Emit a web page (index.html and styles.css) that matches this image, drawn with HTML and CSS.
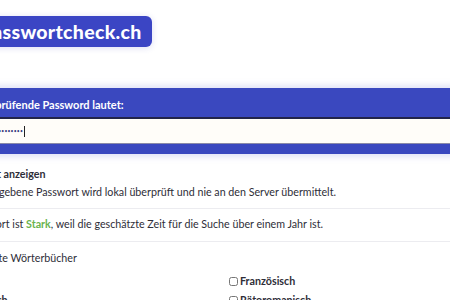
FILE: index.html
```html
<!DOCTYPE html>
<html lang="de">
<head>
<meta charset="utf-8">
<title>Passwortcheck.ch</title>
<link rel="stylesheet" href="styles.css">
</head>
<body>
<div class="page">
  <header class="header">
    <div class="logo">Passwortcheck.ch</div>
  </header>
  <section class="band">
    <label class="band-label">Das zu prüfende Password lautet:</label>
    <div class="field"><span class="dots">••••••••••••••••••••</span><span class="caret"></span></div>
  </section>
  <section class="content">
    <label class="show"><input type="checkbox" class="cb"> Passwort anzeigen</label>
    <p class="note">Das eingegebene Passwort wird lokal überprüft und nie an den Server übermittelt.</p>
    <p class="result">Das Passwort ist <span class="strong">Stark</span>, weil die geschätzte Zeit für die Suche über einem Jahr ist.</p>
    <p class="dict-title">Verwendete Wörterbücher</p>
    <div class="dicts">
      <label class="dict"></label>
      <label class="dict"><input type="checkbox" class="cb">Französisch</label>
      <label class="dict"><input type="checkbox" class="cb">Deutsch</label>
      <label class="dict"><input type="checkbox" class="cb">Rätoromanisch</label>
    </div>
  </section>
</div>
</body>
</html>
```
FILE: styles.css
```css
html, body {
  margin: 0;
  padding: 0;
  background: #ffffff;
  overflow: hidden;
}
body {
  font-family: "Lato", "Liberation Sans", sans-serif;
  color: #2e2e38;
}
.page {
  margin-left: -47px;
  width: 560px;
}
.header {
  padding-top: 16px;
  padding-left: 18px;
  height: 31px;
}
.logo {
  display: inline-block;
  background: #3b45c4;
  color: #ffffff;
  font-weight: 900;
  font-size: 19.5px;
  letter-spacing: 0.3px;
  line-height: 31px;
  height: 31px;
  padding: 0 10px 0 9px;
  border-radius: 6px;
  box-shadow: 0 1px 6px rgba(59, 69, 196, 0.18);
}
.band {
  margin-top: 41px;
  background: #3a48bf;
  padding: 10px 0 10px 0;
  box-shadow: 0 0 7px 2px rgba(90, 100, 210, 0.22);
}
.band-label {
  display: block;
  color: #ffffff;
  font-weight: 700;
  font-size: 11px;
  line-height: 14px;
  padding-left: 7px;
  margin-bottom: 5px;
}
.field {
  background: #fffdf9;
  border-top: 2px solid #22244a;
  border-bottom: 1px solid #8a8aa8;
  height: 24px;
  display: flex;
  align-items: center;
  padding-left: 8px;
}
.dots {
  font-size: 5px;
  letter-spacing: 0.2px;
  color: #3a3c80;
}
.caret {
  display: inline-block;
  width: 1px;
  height: 11px;
  background: #222;
  margin-left: 1px;
}
.content {
  padding-top: 14px;
  font-size: 10.7px;
}
.show {
  display: flex;
  align-items: center;
  gap: 3px;
  font-weight: 700;
  height: 12px;
  line-height: 12px;
  margin-left: -14px;
}
.note {
  margin: 6px 0 0;
  line-height: 12px;
  padding-bottom: 10px;
  border-bottom: 1px solid #ececf0;
}
.result {
  margin: 0 0 0 -7px;
  padding: 9px 0 11px 7px;
  line-height: 12px;
  border-bottom: 1px solid #ececf0;
  text-indent: -7px;
}
.strong {
  color: #6ab34e;
  font-weight: 700;
}
.dict-title {
  margin: 0;
  padding-top: 10px;
  line-height: 12px;
  text-indent: -2px;
}
.dicts {
  display: grid;
  grid-template-columns: 272px 272px;
  row-gap: 7px;
  margin-top: 11px;
}
.dict {
  display: flex;
  align-items: center;
  font-weight: 700;
  height: 12px;
  line-height: 12px;
}
.cb {
  width: 9px;
  height: 9px;
  margin: 0 2px 0 4px;
}
```
